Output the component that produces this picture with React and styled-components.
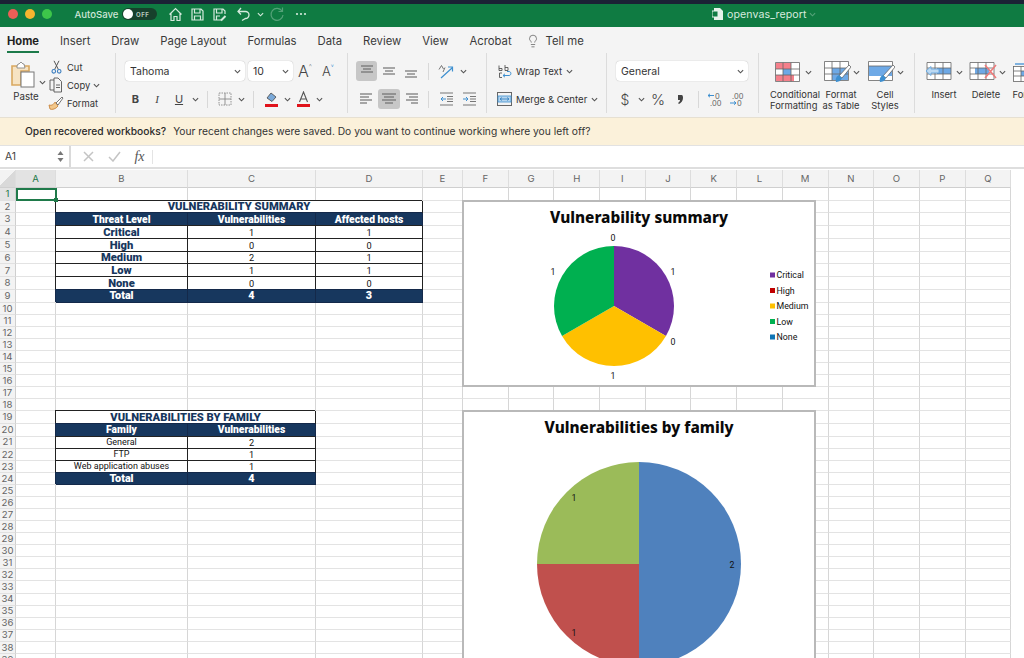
import React from "react";
import styled, { createGlobalStyle } from "styled-components";
import { Lightbulb } from "lucide-react";

const Global = createGlobalStyle`
  html, body { margin: 0; padding: 0; height: 658px; overflow: hidden; background: #fff; }
  body { font-family: Inter, "Liberation Sans", sans-serif; color: #2b2b2b; }
  * { box-sizing: border-box; }
`;

const Page = styled.div`
  position: relative;
  width: 1024px;
  height: 658px;
  overflow: hidden;
  display: flex;
  flex-direction: column;
`;

const TitleBar = styled.header`
  height: 27px;
  flex: none;
  background: #0f7b42;
  border-top: 4px solid #1b2235;
  display: flex;
  align-items: center;
  padding: 0 0 3px 4.5px;
  color: #cfe6d8;
`;
const Light = styled.span`
  width: 10px;
  height: 10px;
  margin: 0 3.5px;
  border-radius: 50%;
  background: ${p => p.$c};
`;
const AutoSave = styled.span`
  margin-left: 19px;
  font-size: 9.6px;
  font-weight: 500;
  width: 47.5px;
`;
const Toggle = styled.span`
  width: 35px;
  height: 12px;
  border-radius: 6px;
  background: #17402c;
  display: flex;
  align-items: center;
  font-size: 6px;
  font-weight: 700;
  letter-spacing: .6px;
  color: #b8c9bf;
  &::before {
    content: "";
    width: 10px;
    height: 10px;
    margin: 0 3px 0 1px;
    border-radius: 50%;
    background: #fff;
  }
`;
const TitleIcon = styled.span`
  width: ${p => p.$w}px;
  flex: none;
  display: flex;
  justify-content: center;
  color: #d5eadd;
  opacity: ${p => p.$dim ? .35 : 1};
`;
const DocName = styled.span`
  font-size: 10.6px;
  color: #d6eadf;
  margin-left: 4px;
  letter-spacing: .1px;
`;

const TabBar = styled.nav`
  height: 26px;
  flex: none;
  background: #f4f4f4;
  display: flex;
  align-items: flex-end;
  padding-left: 7px;
  gap: 21px;
`;
const Tab = styled.span`
  height: 24px;
  font-size: ${p => p.$on ? 11.15 : 11.3}px;
  line-height: 24px;
  font-weight: ${p => p.$on ? 700 : 400};
  color: ${p => p.$on ? "#1f1f1f" : "#3a3a3a"};
  border-bottom: 2px solid ${p => p.$on ? "#1c7a4a" : "transparent"};
  margin-left: ${p => p.$tight ? -7 : 0}px;
  display: flex;
  align-items: center;
  gap: 6px;
  padding-top: 2px;
`;

const Ribbon = styled.section`
  height: 64px;
  flex: none;
  background: #f4f4f4;
  display: flex;
  padding-bottom: 4px;
`;
const Group = styled.div`
  width: ${p => p.$w}px;
  flex: none;
  padding: 8px 0 0 ${p => p.$pl || 0}px;
  border-right: ${p => p.$last ? "none" : "1px solid #dcdcdc"};
  display: ${p => p.$row ? "flex" : "block"};
`;
const ToolRow = styled.div`
  height: 20px;
  display: flex;
  align-items: center;
  margin-bottom: 8px;
`;
const Slot = styled.span`
  width: ${p => p.$w}px;
  height: 20px;
  flex: none;
  display: flex;
  align-items: center;
  justify-content: center;
  border-radius: 3px;
  background: ${p => p.$on ? "#c7c7c7" : "transparent"};
  font-size: ${p => p.$fs || 11}px;
  font-weight: ${p => p.$fw || 400};
  color: #444;
`;
const Caret = styled.sup`
  font-size: 7px;
  line-height: 1;
  align-self: flex-start;
  margin-top: 2px;
  color: ${p => p.$c};
`;
const SerifItalic = styled.em`
  font-family: "Liberation Serif", serif;
`;
const Bar = styled.span`
  width: ${p => p.$w}px;
  flex: none;
  height: 20px;
  margin-left: ${p => p.$ml || 0}px;
  background: #fff;
  border-radius: 4px;
  box-shadow: 0 0 1px rgba(0,0,0,.35);
  display: flex;
  align-items: center;
  justify-content: space-between;
  padding: 0 4px 0 5px;
  font-size: 10.5px;
  color: #333;
`;
const Divider = styled.i`
  display: block;
  width: 1px;
  height: 17px;
  background: #d8d8d8;
`;
const PasteCol = styled.div`
  width: 39px;
  display: flex;
  flex-direction: column;
  align-items: center;
  font-size: 9.7px;
  color: #333;
  padding-left: 9px;
  & > svg { margin-bottom: 3px; }
`;
const PasteLabel = styled.span`
  padding-left: 4px;
`;
const PasteChev = styled.span`
  width: 7px;
  flex: none;
  margin-top: 9px;
`;
const ClipCol = styled.div`
  margin-top: -3px;
  display: flex;
  flex-direction: column;
  padding-left: 1px;
`;
const ClipItem = styled.div`
  height: 18.5px;
  display: flex;
  align-items: center;
  gap: 3px;
  font-size: 9.4px;
  color: #333;
`;
const ClipGlyph = styled.span`
  width: 18px;
  display: flex;
  justify-content: center;
  margin-right: -1px;
`;
const TextTool = styled.div`
  height: 20px;
  margin-bottom: 8px;
  display: flex;
  align-items: center;
  font-size: 9.6px;
  color: #333;
  & > svg:first-child { margin-right: 4px; flex: none; }
  & > svg:last-child { margin-left: 4px; }
`;
const BigBtn = styled.div`
  width: ${p => p.$w}px;
  margin-left: ${p => p.$ml || 0}px;
  flex: none;
  display: flex;
  flex-direction: column;
`;
const BigIcon = styled.div`
  height: 22px;
  margin-top: 0;
  padding-left: ${p => p.$pl}px;
  display: flex;
  align-items: center;
  gap: ${p => p.$gap ?? 4}px;
`;
const BigLabel = styled.div`
  margin-top: 7px;
  font-size: 9.4px;
  line-height: 10.5px;
  text-align: center;
  color: #333;
  white-space: pre;
`;

const Notice = styled.div`
  height: 28px;
  flex: none;
  background: #fbf1da;
  border-top: 1px solid #e6e0d2;
  padding-left: 25px;
  font-size: 10.25px;
  line-height: 27px;
  color: #333;
  & b { font-weight: 500; margin-right: 7px; color: #2a2a2a; }
`;
const FormulaBar = styled.div`
  height: 24px;
  flex: none;
  background: #fff;
  border-top: 1px solid #e2e2e2;
  border-bottom: 2px solid #dedede;
  display: flex;
  align-items: center;
  font-size: 10.4px;
  color: #444;
`;
const NameBox = styled.div`
  width: 71px;
  height: 100%;
  padding-left: 5px;
  border-right: 2px solid #dadada;
  display: flex;
  align-items: center;
  justify-content: space-between;
  padding-right: 5px;
`;
const FormulaTool = styled.span`
  width: 26px;
  display: flex;
  justify-content: center;
  color: #c4c4c4;
  margin-left: ${p => p.$ml || 0}px;
`;
const Fx = styled.span`
  font-family: "Liberation Serif", serif;
  font-style: italic;
  font-size: 14px;
  color: #555;
  width: 26px;
  text-align: center;
  border-right: 1px solid #e4e4e4;
  line-height: 14px;
`;

const cols = [16, 40, 132, 128, 107, 40, ...Array(12).fill(45.7)];
const Sheet = styled.div`
  position: relative;
  flex: 1;
  min-height: 0;
  padding-top: 1px;
  background: #fff;
  overflow: hidden;
`;
const rowHeight = (r) => {
  if (r === 1) return 12.5;
  if (r <= 9) return 12.8;
  if (r === 19 || r === 20) return 12.65;
  return 12.07;
};
const rows = Array.from({ length: 39 }, (_, i) => i + 1);
const Grid = styled.div`
  display: grid;
  grid-template-columns: ${cols.map(c => c + "px").join(" ")};
  grid-template-rows: 18px ${rows.map(r => rowHeight(r) + "px").join(" ")};
  font-family: Roboto, sans-serif;
`;
const ColHead = styled.div`
  height: 18px;
  background: ${p => p.$on ? "#e3e3e3" : "#f3f3f3"};
  border-right: 1px solid #dddddd;
  border-bottom: 1px solid #cfcfcf;
  color: ${p => p.$on ? "#1f7a4a" : "#666"};
  font-family: Inter, sans-serif;
  font-size: 9.6px;
  display: flex;
  align-items: center;
  justify-content: center;
  ${p => p.$corner && `background: linear-gradient(135deg, #f3f3f3 50%, #d9d9d9 50%);`}
`;
const RowHead = styled.div`
  background: ${p => p.$on ? "#e3e3e3" : "#f3f3f3"};
  border-right: 1px solid #cfcfcf;
  border-bottom: 1px solid #e1e1e1;
  color: ${p => p.$on ? "#1f7a4a" : "#666"};
  font-family: Inter, sans-serif;
  font-size: 9.6px;
  line-height: 1;
  display: flex;
  align-items: center;
  justify-content: center;
`;
const frame = (c) => `padding-top:1px;border-right-color:${c};border-bottom-color:${c};box-shadow:-1px -1px 0 ${c};`;
const kinds = {
  blank: "",
  title: `color:#17375e;font-weight:900;font-size:11.2px;${frame("#222")}`,
  head: `background:#17375e;color:#fff;font-weight:900;font-size:10.3px;${frame("#14294a")}`,
  level: `color:#17375e;font-weight:900;font-size:11.2px;${frame("#222")}`,
  value: `color:#111;font-size:9.2px;${frame("#222")}`,
  label: `color:#111;font-size:9px;${frame("#222")}`,
  total: `background:#17375e;color:#fff;font-weight:900;font-size:10.8px;${frame("#14294a")}`,
};
const Cell = styled.div`
  grid-column: span ${p => p.$span || 1};
  min-width: 0;
  border-right: 1px solid #d6d6d6;
  border-bottom: 1px solid #e3e3e3;
  display: flex;
  align-items: center;
  justify-content: center;
  line-height: 1;
  white-space: nowrap;
  ${p => kinds[p.$kind || "blank"]}
`;
const Selection = styled.div`
  position: absolute;
  left: 16px;
  top: 19px;
  width: 41px;
  height: 13px;
  border: 2px solid #1f7a4a;
  &::after {
    content: "";
    position: absolute;
    right: -3px;
    bottom: -3px;
    width: 4px;
    height: 4px;
    background: #1f7a4a;
  }
`;
const Chart = styled.figure`
  position: absolute;
  left: 462px;
  top: ${p => p.$top}px;
  width: 354px;
  height: ${p => p.$h}px;
  margin: 0;
  background: #fff;
  border: 2px solid #b9b9b9;
  overflow: hidden;
  & > svg { display: block; position: absolute; left: 0; top: 0; }
`;
const ChartTitle = styled.figcaption`
  position: relative;
  z-index: 1;
  text-align: center;
  font-family: "Noto Sans", sans-serif;
  font-weight: 800;
  color: #0a0a0a;
  font-size: 15.35px;
  line-height: 20px;
  padding-top: 5px;
`;

const Chev = ({ s = 7, c = "#555" }) => (
  <svg width={s} height={s} viewBox="0 0 8 8" fill="none"><path d="M1 2.5 4 5.5 7 2.5" stroke={c} strokeWidth="1.3" /></svg>
);
const S = ({ w = 16, h = 16, children, sw = 1, stroke = "#555", fill = "none" }) => (
  <svg width={w} height={h} viewBox={`0 0 ${w} ${h}`} fill={fill} stroke={stroke} strokeWidth={sw}>{children}</svg>
);
const Align = ({ rows }) => (
  <S w={16} h={16} sw={1.1} stroke="#666">
    {rows.map((r, i) => <path key={i} d={`M${r[0]} ${r[2]}H${r[1]}`} />)}
  </S>
);

const HomeIcon = () => <S w={15} h={15} stroke="#d5eadd" sw={1.2}><path d="M1.5 7.5 7.5 1.5 13.5 7.5M3 6.5V13.5H6V9.5H9V13.5H12V6.5" /></S>;
const SaveIcon = () => <S w={15} h={15} stroke="#d5eadd" sw={1.2}><path d="M2 2H11L13 4V13H2ZM4.5 2V6H10V2M4.5 13V9H10.5V13" /></S>;
const SaveAsIcon = () => <S w={15} h={15} stroke="#d5eadd" sw={1.2}><path d="M9 13H2V2H11L13 4V7M4.5 2V6H10V2M4.5 13V9H8" /><path d="M9 13.5 13.5 9" strokeWidth="2" /></S>;
const UndoIcon = () => <S w={16} h={16} stroke="#d5eadd" sw={1.3}><path d="M5 2 2 5.5 5 8.5M2 5.5H9.5A3.5 3.5 0 0 1 9.5 12.5L6 14.5" /></S>;
const RedoIcon = () => <S w={16} h={16} stroke="#d5eadd" sw={1.2}><path d="M13 5A6 6 0 1 0 14 9M13.5 1.5V5.5H9.5" /></S>;
const Dots = () => <svg width="12" height="4" viewBox="0 0 12 4" fill="#d5eadd"><circle cx="2" cy="2" r="1.1" /><circle cx="6" cy="2" r="1.1" /><circle cx="10" cy="2" r="1.1" /></svg>;
const DocIcon = () => <svg width="11" height="12" viewBox="0 0 11 12"><path d="M2 0H8L11 3V12H2Z" fill="#e6f1ea" /><rect x="0" y="3" width="6" height="6" fill="#0f7b42" stroke="#e6f1ea" /></svg>;

const PasteIcon = () => (
  <svg width="26" height="27" viewBox="0 0 26 27" fill="none">
    <path d="M1 5H18V10H10V24H1Z" fill="#f6e3c3" stroke="#d9a860" strokeWidth="1.6" />
    <path d="M6 5 7 3H8L10 1 12 3H13L14 7H6Z" fill="#fff" stroke="#888" strokeWidth=".9" />
    <rect x="10" y="11" width="13" height="15" fill="#fff" stroke="#777" />
  </svg>
);
const CutIcon = () => (
  <svg width="11" height="14" viewBox="0 0 11 14" fill="none">
    <path d="M3.6 9.5 8 .8M7.4 9.5 3 .8" stroke="#555" strokeWidth="1" />
    <circle cx="2.8" cy="11.3" r="1.8" stroke="#3d7fc0" strokeWidth="1.1" />
    <circle cx="8.2" cy="11.3" r="1.8" stroke="#3d7fc0" strokeWidth="1.1" />
  </svg>
);
const CopyIcon = () => <S w={14} h={16} stroke="#555" sw={.9}><path d="M5 3H1V13H5M5 1H9L12.5 4.5V15H5ZM7 8H11M7 10.5H11" /></S>;
const BrushIcon = () => (
  <svg width="16" height="15" viewBox="0 0 16 15" fill="none">
    <path d="M1 9 C4 10 6 8 7 6L10 10C8 13 4 14 2 13Z" fill="#f2c88c" stroke="#c9863f" strokeWidth=".9" />
    <path d="M8 7 14 1 15 2 10 9Z" fill="#fff" stroke="#666" strokeWidth=".9" />
  </svg>
);
const BordersIcon = () => <S w={14} h={14} stroke="#888" sw={.9}><path d="M1 1H13V13H1Z" strokeDasharray="1.5 1" /><path d="M7 1V13M1 7H13" /></S>;
const FillIcon = () => (
  <svg width="15" height="16" viewBox="0 0 15 16" fill="none">
    <path d="M3 7 7 2 12 6 8 10.5Z" fill="#7aa9d9" stroke="#555" strokeWidth=".9" />
    <rect x="1" y="13" width="13" height="3" fill="#e0131b" />
  </svg>
);
const FontColorIcon = () => (
  <svg width="15" height="16" viewBox="0 0 15 16" fill="none">
    <path d="M3.5 11 7.5 1 11.5 11M5 8H10" stroke="#555" strokeWidth="1.1" />
    <rect x="1" y="13" width="13" height="3" fill="#e0131b" />
  </svg>
);
const OrientIcon = () => (
  <svg width="16" height="15" viewBox="0 0 16 15" fill="none">
    <path d="M1 5.5 3.5 1.5 5.5 5 M5 8 7 3.5" stroke="#666" strokeWidth=".9" />
    <path d="M3 14 14 4M10 3H14.5V7.5" stroke="#3d8fd0" strokeWidth="1.2" />
  </svg>
);
const Indent = ({ flip }) => (
  <svg width="15" height="14" viewBox="0 0 15 14" fill="none" stroke="#777">
    <path d="M1 1H14M1 13H14M8 4.5H14M8 7H14M8 9.5H14" />
    <path d={flip ? "M1 7H6M4 5 6 7 4 9" : "M2 7H7M4 5 2 7 4 9"} stroke="#3d8fd0" />
  </svg>
);
const WrapIcon = () => (
  <svg width="15" height="15" viewBox="0 0 15 15" fill="none">
    <path d="M2 1.5V6.5M2 4.5H5V6.5H2M8 1V6.5H11V3.5H8M5 9H2.5V13.5H5" stroke="#555" strokeWidth=".9" />
    <path d="M6 11.5H12C14.5 11.5 14.5 7.5 12 7.5H10M6 11.5 8 9.8M6 11.5 8 13.2" stroke="#3d8fd0" />
  </svg>
);
const MergeIcon = () => (
  <svg width="15" height="14" viewBox="0 0 15 14" fill="none">
    <rect x=".5" y=".5" width="14" height="13" stroke="#666" />
    <rect x="1" y="4" width="13" height="6" fill="#b6d5ee" stroke="#3d8fd0" strokeWidth=".8" />
    <path d="M3 7H12M3 7 5 5.5M3 7 5 8.5M12 7 10 5.5M12 7 10 8.5" stroke="#2f7fbf" strokeWidth=".8" />
  </svg>
);
const CommaIcon = () => <svg width="6" height="9" viewBox="0 0 6 9" fill="#444"><path d="M1 0H4.5C6 0 6 2 6 3 6 6 4 8 2 9L1 8C2.5 7 3 6 3 5H1Z" /></svg>;
const Decimal = ({ more }) => (
  <svg width="16" height="16" viewBox="0 0 16 16" fill="none">
    {more ? (
      <>
        <path d="M1 4.5H7M1 4.5 3 2.8M1 4.5 3 6.2" stroke="#3d8fd0" />
        <text x="8" y="7.5" fontSize="7.5" fill="#666" fontFamily="Inter">0</text>
        <text x="3" y="15" fontSize="7.5" fill="#666" fontFamily="Inter">.00</text>
      </>
    ) : (
      <>
        <text x="4" y="7.5" fontSize="7.5" fill="#666" fontFamily="Inter">.00</text>
        <path d="M2 12H8M8 12 6 10.3M8 12 6 13.7" stroke="#3d8fd0" />
        <text x="9" y="15" fontSize="7.5" fill="#666" fontFamily="Inter">0</text>
      </>
    )}
  </svg>
);
const CFIcon = () => (
  <svg width="25" height="20" viewBox="0 0 25 20" fill="none">
    <rect x="0.5" y=".5" width="24" height="19" fill="#fff" />
    <rect x="1" y="1" width="15" height="6" fill="#f5808b" />
    <rect x="8" y="7" width="8" height="6" fill="#6ea9e6" />
    <rect x="1" y="13" width="18" height="6" fill="#f5808b" />
    <path d="M.5 .5H24.5V19.5H.5ZM8 .5V19.5M16 .5V19.5M.5 7H24.5M.5 13H24.5" stroke="#666" strokeWidth=".8" />
  </svg>
);
const TableBrush = ({ full }) => (
  <svg width="27" height="22" viewBox="0 0 27 22" fill="none">
    <rect x=".5" y=".5" width="24" height="19" fill="#fff" />
    <rect x={full ? 1 : 8} y={full ? 5 : 7} width={full ? 23 : 16} height={full ? 10 : 12} fill="#6ea9e6" />
    <path d={full ? "M.5 .5H24.5V19.5H.5ZM.5 5H24.5" : "M.5 .5H24.5V19.5H.5ZM8 .5V19.5M16 .5V19.5M.5 7H24.5M.5 13H24.5"} stroke="#666" strokeWidth=".8" />
    <path d="M15 15 25 4 27 6 18 17Z" fill="#fff" stroke="#666" strokeWidth=".8" />
    <path d="M12 21C11 17 13 15 15 14L18 17C17 20 14 21 12 21Z" fill="#3d8fd0" />
  </svg>
);
const InsertIcon = () => (
  <svg width="27" height="20" viewBox="0 0 27 20" fill="none">
    <rect x="2" y=".5" width="24" height="17" fill="#fff" />
    <rect x="12" y="6" width="14" height="6" fill="#6ea9e6" />
    <path d="M2 .5H26V17.5H2ZM10 .5V17.5M18 .5V17.5M2 6H26M2 12H26" stroke="#666" strokeWidth=".8" />
    <path d="M1 9 6 4.5V7H14V11H6V13.5Z" fill="#bcd9f2" stroke="#5aa0dc" strokeWidth=".8" />
  </svg>
);
const DeleteIcon = () => (
  <svg width="29" height="20" viewBox="0 0 29 20" fill="none">
    <rect x="1" y=".5" width="24" height="17" fill="#fff" />
    <rect x="6" y="6" width="14" height="6" fill="#6ea9e6" />
    <path d="M1 .5H25V17.5H1ZM9 .5V17.5M17 .5V17.5M1 6H25M1 12H25" stroke="#666" strokeWidth=".8" />
    <path d="M16 3 27 16M27 3 16 16" stroke="#ee7b7b" strokeWidth="1.6" />
  </svg>
);
const FormatCellIcon = () => (
  <svg width="27" height="22" viewBox="0 0 27 22" fill="none">
    <path d="M2 3H20" stroke="#7fb2e0" strokeWidth="2" />
    <rect x=".5" y="5.5" width="24" height="15" fill="#fff" stroke="#666" strokeWidth=".8" />
    <rect x="8" y="10" width="9" height="5" fill="#6ea9e6" />
    <path d="M8 5.5V20.5M.5 10H24.5M.5 15H24.5" stroke="#666" strokeWidth=".8" />
  </svg>
);
const Steppers = () => (
  <svg width="7" height="13" viewBox="0 0 7 13" fill="#777"><path d="M3.5 1 6.5 5H.5ZM3.5 12 .5 8H6.5Z" /></svg>
);

const colLetters = "ABCDEFGHIJKLMNOPQ".split("");
const T = (kind, text, span) => ({ kind, text, span });
const B = T("blank");
const tableRows = {
  2: [B, T("title", "VULNERABILITY SUMMARY", 3)],
  3: [B, T("head", "Threat Level"), T("head", "Vulnerabilities"), T("head", "Affected hosts")],
  4: [B, T("level", "Critical"), T("value", "1"), T("value", "1")],
  5: [B, T("level", "High"), T("value", "0"), T("value", "0")],
  6: [B, T("level", "Medium"), T("value", "2"), T("value", "1")],
  7: [B, T("level", "Low"), T("value", "1"), T("value", "1")],
  8: [B, T("level", "None"), T("value", "0"), T("value", "0")],
  9: [B, T("total", "Total"), T("total", "4"), T("total", "3")],
  19: [B, T("title", "VULNERABILITIES BY FAMILY", 2)],
  20: [B, T("head", "Family"), T("head", "Vulnerabilities")],
  21: [B, T("label", "General"), T("value", "2")],
  22: [B, T("label", "FTP"), T("value", "1")],
  23: [B, T("label", "Web application abuses"), T("value", "1")],
  24: [B, T("total", "Total"), T("total", "4")],
};

const slice = (cx, cy, r, a0, a1) => {
  const rad = d => (d - 90) * Math.PI / 180;
  const p = d => `${cx + r * Math.cos(rad(d))} ${cy + r * Math.sin(rad(d))}`;
  return `M${cx} ${cy}L${p(a0)}A${r} ${r} 0 ${a1 - a0 > 180 ? 1 : 0} 1 ${p(a1)}Z`;
};
const chartText = { fontFamily: "Roboto, sans-serif", fontSize: 8.8, fill: "#111" };
const legend = [["Critical", "#7030a0"], ["High", "#c00000"], ["Medium", "#ffc000"], ["Low", "#00b050"], ["None", "#0f75b5"]];

const SummaryChart = () => (
  <Chart $top={31} $h={187}>
    <svg width="350" height="183">
      <path d={slice(150, 104, 60, 0, 120)} fill="#7030a0" />
      <path d={slice(150, 104, 60, 120, 240)} fill="#ffc000" />
      <path d={slice(150, 104, 60, 240, 360)} fill="#00b050" />
      {[["0", 149, 39], ["1", 209, 73], ["0", 209, 143], ["1", 149, 177], ["1", 89, 73]].map(([t, x, y], i) => (
        <text key={i} x={x} y={y} textAnchor="middle" {...chartText}>{t}</text>
      ))}
      {legend.map(([t, c], i) => (
        <g key={t}>
          <rect x="306" y={70.5 + i * 15.5} width="5" height="5" fill={c} />
          <text x="312.5" y={76 + i * 15.5} {...chartText}>{t}</text>
        </g>
      ))}
    </svg>
    <ChartTitle>Vulnerability summary</ChartTitle>
  </Chart>
);
const FamilyChart = () => (
  <Chart $top={241} $h={260}>
    <svg width="350" height="256">
      <path d={slice(175, 152, 102, 0, 180)} fill="#4f81bd" />
      <path d={slice(175, 152, 102, 180, 270)} fill="#c0504d" />
      <path d={slice(175, 152, 102, 270, 360)} fill="#9bbb59" />
      {[["1", 110, 89], ["2", 268, 156], ["1", 110, 224]].map(([t, x, y], i) => (
        <text key={i} x={x} y={y} textAnchor="middle" {...chartText}>{t}</text>
      ))}
    </svg>
    <ChartTitle>Vulnerabilities by family</ChartTitle>
  </Chart>
);

export default function App() {
  return (
    <Page>
      <Global />
      <TitleBar>
        <Light $c="#ec5f57" /><Light $c="#f5b52f" /><Light $c="#3dc64a" />
        <AutoSave>AutoSave</AutoSave>
        <Toggle>OFF</Toggle>
        <TitleIcon $w={10} />
        <TitleIcon $w={16}><HomeIcon /></TitleIcon>
        <TitleIcon $w={6} />
        <TitleIcon $w={16}><SaveIcon /></TitleIcon>
        <TitleIcon $w={6} />
        <TitleIcon $w={16}><SaveAsIcon /></TitleIcon>
        <TitleIcon $w={9} />
        <TitleIcon $w={16}><UndoIcon /></TitleIcon>
        <TitleIcon $w={16}><Chev c="#d5eadd" /></TitleIcon>
        <TitleIcon $w={18} $dim><RedoIcon /></TitleIcon>
        <TitleIcon $w={3} />
        <TitleIcon $w={24}><Dots /></TitleIcon>
        <TitleIcon $w={399} />
        <DocIcon />
        <DocName>openvas_report</DocName>
        <TitleIcon $w={12} $dim><Chev c="#d5eadd" /></TitleIcon>
      </TitleBar>
      <TabBar>
        <Tab $on>Home</Tab>
        <Tab>Insert</Tab>
        <Tab>Draw</Tab>
        <Tab>Page Layout</Tab>
        <Tab>Formulas</Tab>
        <Tab>Data</Tab>
        <Tab>Review</Tab>
        <Tab>View</Tab>
        <Tab>Acrobat</Tab>
        <Tab $tight><Lightbulb size={14} strokeWidth={1.2} color="#555" />Tell me</Tab>
      </TabBar>
      <Ribbon>
        <Group $w={116} $row>
          <PasteCol><PasteIcon /><PasteLabel>Paste</PasteLabel></PasteCol>
          <PasteChev><Chev /></PasteChev>
          <ClipCol>
            <ClipItem><ClipGlyph><CutIcon /></ClipGlyph>Cut</ClipItem>
            <ClipItem><ClipGlyph><CopyIcon /></ClipGlyph>Copy<Chev /></ClipItem>
            <ClipItem><ClipGlyph><BrushIcon /></ClipGlyph>Format</ClipItem>
          </ClipCol>
        </Group>
        <Group $w={232} $pl={9}>
          <ToolRow>
            <Bar $w={120}>Tahoma<Chev /></Bar>
            <Bar $w={45} $ml={3}>10<Chev /></Bar>
            <Slot $w={24} $fs={16} $fw={300}>A<Caret $c="#888">^</Caret></Slot>
            <Slot $w={22} $fs={13} $fw={300}>A<Caret $c="#3d8fd0">˅</Caret></Slot>
          </ToolRow>
          <ToolRow>
            <Slot $w={21} $fs={11}><b>B</b></Slot>
            <Slot $w={22} $fs={11}><SerifItalic>I</SerifItalic></Slot>
            <Slot $w={22} $fs={11}><u>U</u></Slot>
            <Slot $w={10}><Chev /></Slot>
            <Slot $w={14}><Divider /></Slot>
            <Slot $w={22}><BordersIcon /></Slot>
            <Slot $w={10}><Chev /></Slot>
            <Slot $w={14}><Divider /></Slot>
            <Slot $w={22}><FillIcon /></Slot>
            <Slot $w={10}><Chev /></Slot>
            <Slot $w={22}><FontColorIcon /></Slot>
            <Slot $w={10}><Chev /></Slot>
          </ToolRow>
        </Group>
        <Group $w={139} $pl={8}>
          <ToolRow>
            <Slot $w={21} $on><Align rows={[[2, 14, 3], [4, 12, 6], [2, 14, 9]]} /></Slot>
            <Slot $w={23}><Align rows={[[2, 14, 5], [4, 12, 8], [2, 14, 11]]} /></Slot>
            <Slot $w={22}><Align rows={[[2, 14, 8], [4, 12, 11], [2, 14, 14]]} /></Slot>
            <Slot $w={12}><Divider /></Slot>
            <Slot $w={24}><OrientIcon /></Slot>
            <Slot $w={10}><Chev /></Slot>
          </ToolRow>
          <ToolRow>
            <Slot $w={22}><Align rows={[[1, 13, 3], [1, 10, 6], [1, 13, 9], [1, 8, 12]]} /></Slot>
            <Slot $w={22} $on><Align rows={[[1, 15, 3], [3, 13, 6], [1, 15, 9], [4, 12, 12]]} /></Slot>
            <Slot $w={22}><Align rows={[[3, 15, 3], [6, 15, 6], [3, 15, 9], [8, 15, 12]]} /></Slot>
            <Slot $w={12}><Divider /></Slot>
            <Slot $w={24}><Indent /></Slot>
            <Slot $w={22}><Indent flip /></Slot>
          </ToolRow>
        </Group>
        <Group $w={120} $pl={10}>
          <TextTool><WrapIcon />Wrap Text<Chev /></TextTool>
          <TextTool><MergeIcon />Merge &amp; Center<Chev /></TextTool>
        </Group>
        <Group $w={152} $pl={9}>
          <ToolRow>
            <Bar $w={132}>General<Chev /></Bar>
          </ToolRow>
          <ToolRow>
            <Slot $w={18} $fs={14} $fw={300}>$</Slot>
            <Slot $w={14}><Chev /></Slot>
            <Slot $w={20} $fs={15} $fw={300}>%</Slot>
            <Slot $w={24}><CommaIcon /></Slot>
            <Slot $w={12}><Divider /></Slot>
            <Slot $w={21}><Decimal more /></Slot>
            <Slot $w={21}><Decimal /></Slot>
          </ToolRow>
        </Group>
        <Group $w={156} $pl={11} $row>
          <BigBtn $w={43}>
            <BigIcon $pl={5} $gap={5}><CFIcon /><Chev /></BigIcon>
            <BigLabel>{"Conditional\nFormatting"}</BigLabel>
          </BigBtn>
          <BigBtn $w={44} $ml={6}>
            <BigIcon $pl={5} $gap={2}><TableBrush /><Chev /></BigIcon>
            <BigLabel>{"Format\nas Table"}</BigLabel>
          </BigBtn>
          <BigBtn $w={42} $ml={1}>
            <BigIcon $pl={4} $gap={2}><TableBrush full /><Chev /></BigIcon>
            <BigLabel>{"Cell\nStyles"}</BigLabel>
          </BigBtn>
        </Group>
        <Group $w={110} $pl={8} $row $last>
          <BigBtn $w={42}>
            <BigIcon $pl={2}><InsertIcon /><Chev /></BigIcon>
            <BigLabel>Insert</BigLabel>
          </BigBtn>
          <BigBtn $w={42}>
            <BigIcon $pl={4} $gap={1}><DeleteIcon /><Chev /></BigIcon>
            <BigLabel>Delete</BigLabel>
          </BigBtn>
          <BigBtn $w={42}>
            <BigIcon $pl={6}><FormatCellIcon /></BigIcon>
            <BigLabel>Format</BigLabel>
          </BigBtn>
        </Group>
      </Ribbon>
      <Notice><b>Open recovered workbooks?</b>Your recent changes were saved. Do you want to continue working where you left off?</Notice>
      <FormulaBar>
        <NameBox>A1<Steppers /></NameBox>
        <FormulaTool $ml={4}><svg width="11" height="11" viewBox="0 0 11 11" fill="none" stroke="#c4c4c4" strokeWidth="1.5"><path d="M1 1 10 10M10 1 1 10" /></svg></FormulaTool>
        <FormulaTool><svg width="13" height="11" viewBox="0 0 13 11" fill="none" stroke="#c4c4c4" strokeWidth="1.5"><path d="M1 6 5 10 12 1" /></svg></FormulaTool>
        <Fx>fx</Fx>
      </FormulaBar>
      <Sheet>
        <Grid>
          <ColHead $corner />
          {colLetters.map(l => <ColHead key={l} $on={l === "A"}>{l}</ColHead>)}
          {rows.map(r => {
            const cells = tableRows[r] || [B];
            const used = cells.reduce((n, c) => n + (c.span || 1), 0);
            const fill = Array.from({ length: colLetters.length - used }, () => B);
            return (
              <React.Fragment key={r}>
                <RowHead $on={r === 1}>{r}</RowHead>
                {[...cells, ...fill].map((c, i) => (
                  <Cell key={i} $kind={c.kind} $span={c.span}>{c.text}</Cell>
                ))}
              </React.Fragment>
            );
          })}
        </Grid>
        <Selection />
        <SummaryChart />
        <FamilyChart />
      </Sheet>
    </Page>
  );
}
